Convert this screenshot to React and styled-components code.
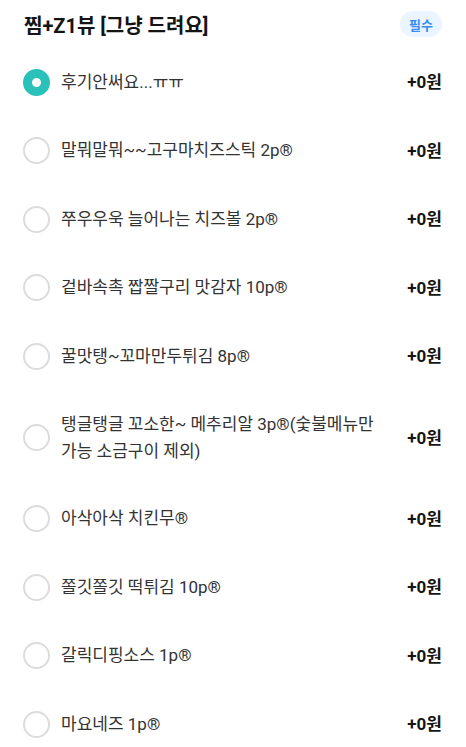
import React from 'react';
import styled, { createGlobalStyle } from 'styled-components';

const GlobalStyle = createGlobalStyle`
  body {
    margin: 0;
    background: #fff;
    font-family: Roboto, 'Noto Sans CJK KR', sans-serif;
  }
`;

const Wrapper = styled.div`
  padding: 0 24px;
`;

const Header = styled.div`
  display: flex;
  align-items: center;
  justify-content: space-between;
  height: 48px;
`;

const Titulo = styled.h2`
  margin: 0;
  font-size: 20px;
  font-weight: 700;
  color: #141414;
`;

const Badge = styled.span`
  display: inline-flex;
  align-items: center;
  justify-content: center;
  height: 26px;
  padding: 0 9px;
  border-radius: 13px;
  background: #eaf5ff;
  color: #3a8cf0;
  font-size: 13px;
  font-weight: 700;
`;

const Lista = styled.ul`
  list-style: none;
  margin: 0;
  padding: 0;
`;

const Opcao = styled.li`
  display: flex;
  align-items: center;
  box-sizing: border-box;
  min-height: 68.5px;
  padding: 20px 0;
`;

const Radio = styled.span`
  flex: none;
  box-sizing: border-box;
  width: 27px;
  height: 27px;
  border-radius: 50%;
  margin-left: -1px;
  border: ${({ ativo }) => (ativo ? '9px solid #2bc1bb' : '2px solid #dcdcdc')};
  background: #fff;
`;

const Nome = styled.span`
  flex: 1;
  margin-left: 11px;
  padding-right: 24px;
  font-size: 17px;
  line-height: 27px;
  color: #333;
`;

const Preco = styled.span`
  flex: none;
  font-size: 17px;
  line-height: 26px;
  font-weight: 700;
  color: #161616;
`;

const opcoes = [
  '후기안써요...ㅠㅠ',
  '말뭐말뭐~~고구마치즈스틱 2p®',
  '쭈우우욱 늘어나는 치즈볼 2p®',
  '겉바속촉 짭짤구리 맛감자 10p®',
  '꿀맛탱~꼬마만두튀김 8p®',
  '탱글탱글 꼬소한~ 메추리알 3p®(숯불메뉴만 가능 소금구이 제외)',
  '아삭아삭 치킨무®',
  '쫄깃쫄깃 떡튀김 10p®',
  '갈릭디핑소스 1p®',
  '마요네즈 1p®',
];

const App = () => {
  const [selecionado, setSelecionado] = React.useState(0);

  return (
    <Wrapper>
      <GlobalStyle />
      <Header>
        <Titulo>찜+Z1뷰 [그냥 드려요]</Titulo>
        <Badge>필수</Badge>
      </Header>
      <Lista>
        {opcoes.map((nome, i) => (
          <Opcao key={nome} onClick={() => setSelecionado(i)}>
            <Radio ativo={selecionado === i} />
            <Nome>{nome}</Nome>
            <Preco>+0원</Preco>
          </Opcao>
        ))}
      </Lista>
    </Wrapper>
  );
};

export default App;
